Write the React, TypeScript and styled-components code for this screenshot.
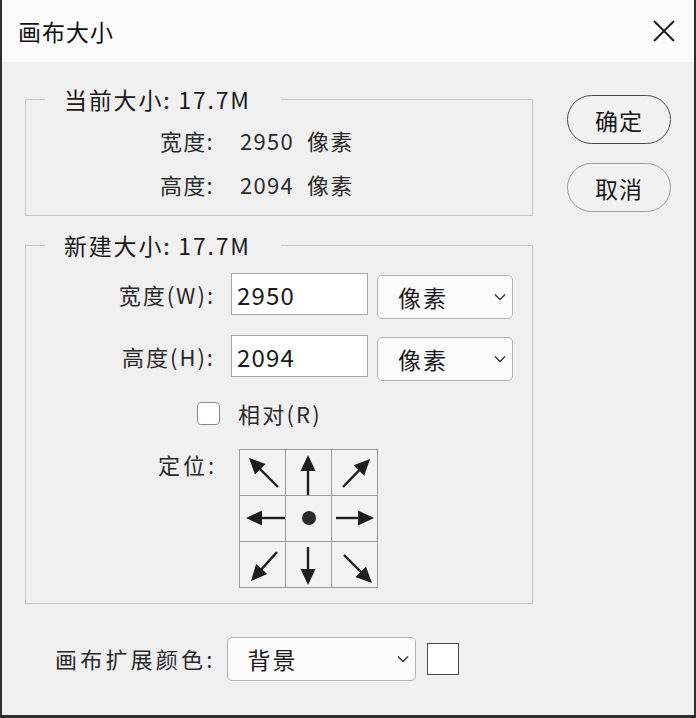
import React from 'react';
import styled, { createGlobalStyle } from 'styled-components';

const GlobalStyle = createGlobalStyle`
  html, body {
    margin: 0;
    padding: 0;
    background: #ffffff;
  }

  body {
    font-family: 'Noto Sans CJK SC', 'Noto Sans', sans-serif;
    color: #1c1c1c;
  }
`;

type Pt = [number, number];

// arrow inside one 45x45 cell, from tail to tip
const Arrow: React.FC<{ from: Pt; to: Pt }> = ({ from, to }) => {
  const [x1, y1] = from;
  const [x2, y2] = to;
  const len = Math.hypot(x2 - x1, y2 - y1);
  const ux = (x2 - x1) / len;
  const uy = (y2 - y1) / len;
  const headLen = 16;
  const half = 7.5;
  const bx = x2 - ux * headLen;
  const by = y2 - uy * headLen;
  const head = `${x2},${y2} ${bx - uy * half},${by + ux * half} ${bx + uy * half},${by - ux * half}`;

  return (
    <svg width="45" height="45" viewBox="0 0 45 45">
      <line x1={x1} y1={y1} x2={bx + ux * 2} y2={by + uy * 2} stroke="#1e1e1e" strokeWidth="2.4" />
      <polygon points={head} fill="#1e1e1e" />
    </svg>
  );
};

const Chevron = () => (
  <svg width="12" height="8" viewBox="0 0 12 8">
    <path d="M1 1.5 L6 6.5 L11 1.5" fill="none" stroke="#333" strokeWidth="1.3" />
  </svg>
);

const CloseIcon = () => (
  <svg width="24" height="24" viewBox="0 0 24 24">
    <path d="M2 2 L22 22 M22 2 L2 22" stroke="#1a1a1a" strokeWidth="1.8" />
  </svg>
);

const anchors: Array<{ from: Pt; to: Pt } | null> = [
  { from: [38, 37], to: [9, 8] },
  { from: [22, 45], to: [22, 5] },
  { from: [11, 37], to: [38, 9] },
  { from: [45, 22], to: [6, 22] },
  null,
  { from: [4, 22], to: [42, 22] },
  { from: [37, 10], to: [11, 39] },
  { from: [22, 5], to: [22, 43] },
  { from: [12, 13], to: [40, 41] },
];

const App: React.FC = () => {
  return (
    <>
      <GlobalStyle />
      <Window>
        <TitleBar>
          <Title>画布大小</Title>
          <CloseButton>
            <CloseIcon />
          </CloseButton>
        </TitleBar>

        <Body>
          <LeftColumn>
            <Group>
              <Legend>当前大小: 17.7M</Legend>
              <InfoList>
                <InfoRow>
                  <InfoLabel>宽度:</InfoLabel>
                  <InfoValue>2950</InfoValue>
                  <span>像素</span>
                </InfoRow>
                <InfoRow>
                  <InfoLabel>高度:</InfoLabel>
                  <InfoValue>2094</InfoValue>
                  <span>像素</span>
                </InfoRow>
              </InfoList>
            </Group>

            <Group $spaced>
              <Legend>新建大小: 17.7M</Legend>
              <FieldRow $first>
                <FieldLabel>宽度(W):</FieldLabel>
                <NumberBox>2950</NumberBox>
                <Select $width={136}>
                  <SelectText>像素</SelectText>
                  <Chevron />
                </Select>
              </FieldRow>
              <FieldRow>
                <FieldLabel>高度(H):</FieldLabel>
                <NumberBox>2094</NumberBox>
                <Select $width={136}>
                  <SelectText>像素</SelectText>
                  <Chevron />
                </Select>
              </FieldRow>

              <CheckRow>
                <CheckBox />
                <span>相对(R)</span>
              </CheckRow>

              <AnchorRow>
                <AnchorLabel>定位:</AnchorLabel>
                <AnchorGrid>
                  {anchors.map((a, i) => (
                    <AnchorCell key={i}>{a ? <Arrow from={a.from} to={a.to} /> : <Dot />}</AnchorCell>
                  ))}
                </AnchorGrid>
              </AnchorRow>
            </Group>

            <ExtendRow>
              <ExtendLabel>画布扩展颜色:</ExtendLabel>
              <Select $width={189}>
                <SelectText>背景</SelectText>
                <Chevron />
              </Select>
              <Swatch />
            </ExtendRow>
          </LeftColumn>

          <ButtonColumn>
            <Button $primary>确定</Button>
            <Button>取消</Button>
          </ButtonColumn>
        </Body>
      </Window>
    </>
  );
};

export default App;

const Window = styled.div`
  width: 696px;
  height: 718px;
  box-sizing: border-box;
  display: flex;
  flex-direction: column;
  background: #f0f0f0;
  border-left: 2px solid #2e2e2e;
  border-right: 2px solid #2e2e2e;
  border-bottom: 3px solid #2e2e2e;
`;

const TitleBar = styled.div`
  height: 62px;
  flex-shrink: 0;
  display: flex;
  align-items: center;
  justify-content: space-between;
  padding: 0 18px 0 16px;
  background: #fbfbfc;
`;

const Title = styled.div`
  font-size: 23px;
  letter-spacing: 1px;
  color: #111;
`;

const CloseButton = styled.div`
  display: flex;
  margin-top: -1px;
`;

const Body = styled.div`
  flex: 1;
  display: flex;
  padding: 22px 0 0 23px;
`;

const LeftColumn = styled.div`
  width: 508px;
  display: flex;
  flex-direction: column;
`;

const Group = styled.fieldset<{ $spaced?: boolean }>`
  margin: ${({ $spaced }) => ($spaced ? '14px' : '0')} 0 0 0;
  padding: 0;
  border: 1px solid #c6c6c6;
  min-width: 0;
`;

const Legend = styled.legend`
  margin-left: 19px;
  padding: 0 30px 0 19px;
  font-size: 23px;
  line-height: 30px;
  letter-spacing: 1.8px;
  color: #1a1a1a;
`;

const InfoList = styled.div`
  padding: 4px 0 9px 134px;
`;

const InfoRow = styled.div`
  display: flex;
  align-items: center;
  height: 44px;
  font-size: 22px;
  letter-spacing: 1.3px;
  color: #2a2a2a;
`;

const InfoLabel = styled.span`
  width: 80px;
`;

const InfoValue = styled.span`
  margin-right: 13px;
`;

const FieldRow = styled.div<{ $first?: boolean }>`
  display: flex;
  align-items: flex-start;
  margin-top: ${({ $first }) => ($first ? '13px' : '16px')};
`;

const FieldLabel = styled.div`
  width: 189px;
  height: 42px;
  display: flex;
  align-items: center;
  justify-content: flex-end;
  font-size: 22px;
  letter-spacing: 2px;
  color: #2a2a2a;
`;

const NumberBox = styled.div`
  margin-left: 16px;
  width: 137px;
  height: 42px;
  box-sizing: border-box;
  display: flex;
  align-items: center;
  padding-left: 5px;
  background: #ffffff;
  border: 1px solid #a8a8a8;
  font-size: 24px;
  letter-spacing: 1.2px;
  color: #1a1a1a;
`;

const Select = styled.div<{ $width: number }>`
  margin-left: 9px;
  margin-top: 2px;
  width: ${({ $width }) => $width}px;
  height: 44px;
  box-sizing: border-box;
  display: flex;
  align-items: center;
  justify-content: space-between;
  padding: 0 6px 0 20px;
  background: #fbfbfb;
  border: 1px solid #b3b3b3;
  border-radius: 5px;
  font-size: 23px;
  color: #1a1a1a;
`;

const SelectText = styled.span`
  letter-spacing: 2px;
`;

const CheckRow = styled.div`
  display: flex;
  align-items: center;
  gap: 18px;
  height: 30px;
  margin: 17px 0 0 171px;
  font-size: 22px;
  letter-spacing: 2.2px;
  color: #2a2a2a;
`;

const CheckBox = styled.div`
  width: 23px;
  height: 23px;
  box-sizing: border-box;
  background: #ffffff;
  border: 1px solid #8a8a8a;
  border-radius: 4px;
`;

const AnchorRow = styled.div`
  display: flex;
  align-items: flex-start;
  margin: 21px 0 15px 132px;
`;

const AnchorLabel = styled.div`
  width: 81px;
  line-height: 30px;
  font-size: 22px;
  letter-spacing: 3px;
  color: #2a2a2a;
`;

const AnchorGrid = styled.div`
  display: grid;
  grid-template-columns: repeat(3, 46px);
  grid-template-rows: repeat(3, 46px);
  border-left: 1px solid #9c9c9c;
  border-top: 1px solid #9c9c9c;
`;

const AnchorCell = styled.div`
  box-sizing: border-box;
  display: flex;
  align-items: flex-start;
  justify-content: flex-start;
  background: #f3f3f3;
  border-right: 1px solid #9c9c9c;
  border-bottom: 1px solid #9c9c9c;
`;

const Dot = styled.div`
  width: 14px;
  height: 14px;
  margin: 15px 0 0 16px;
  border-radius: 50%;
  background: #2a2a2a;
`;

const ExtendRow = styled.div`
  display: flex;
  align-items: center;
  margin: 31px 0 0 30px;
`;

const ExtendLabel = styled.div`
  font-size: 22px;
  letter-spacing: 3.2px;
  color: #2a2a2a;
  margin-right: 2px;
`;

const Swatch = styled.div`
  width: 32px;
  height: 32px;
  box-sizing: border-box;
  margin: 2px 0 0 11px;
  background: #ffffff;
  border: 1px solid #4a4a4a;
`;

const ButtonColumn = styled.div`
  display: flex;
  flex-direction: column;
  gap: 19px;
  margin: 11px 0 0 34px;
`;

const Button = styled.div<{ $primary?: boolean }>`
  width: 104px;
  height: 49px;
  box-sizing: border-box;
  display: flex;
  align-items: center;
  justify-content: center;
  border-radius: 25px;
  border: ${({ $primary }) => ($primary ? '1.5px solid #4b4b4b' : '1px solid #9a9a9a')};
  background: #f2f2f2;
  font-size: 23px;
  letter-spacing: 1px;
  color: #1a1a1a;
`;
